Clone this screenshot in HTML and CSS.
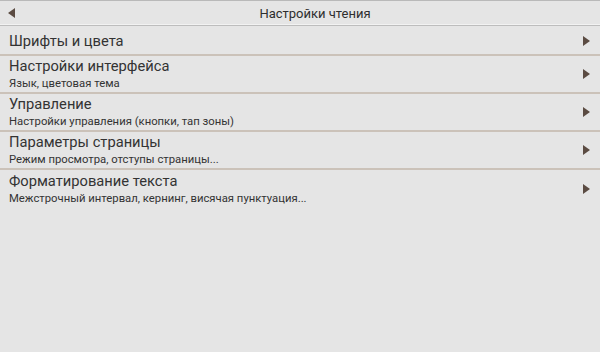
FILE: index.html
```html
<!DOCTYPE html>
<html lang="ru">
<head>
    <meta charset="UTF-8">
    <meta name="viewport" content="width=device-width, initial-scale=1.0">
    <title>Настройки чтения</title>
    <link rel="stylesheet" href="styles.css">
</head>
<body>
    <div class="screen">
        <div class="header">
            <span class="back"></span>
            <h1>Настройки чтения</h1>
        </div>

        <ul class="menu">
            <li class="item single">
                <div class="texts">
                    <div class="title">Шрифты и цвета</div>
                </div>
                <span class="arrow"></span>
            </li>
            <li class="item">
                <div class="texts">
                    <div class="title">Настройки интерфейса</div>
                    <div class="sub">Язык, цветовая тема</div>
                </div>
                <span class="arrow"></span>
            </li>
            <li class="item">
                <div class="texts">
                    <div class="title">Управление</div>
                    <div class="sub">Настройки управления (кнопки, тап зоны)</div>
                </div>
                <span class="arrow"></span>
            </li>
            <li class="item">
                <div class="texts">
                    <div class="title">Параметры страницы</div>
                    <div class="sub">Режим просмотра, отступы страницы...</div>
                </div>
                <span class="arrow"></span>
            </li>
            <li class="item last">
                <div class="texts">
                    <div class="title">Форматирование текста</div>
                    <div class="sub">Межстрочный интервал, кернинг, висячая пунктуация...</div>
                </div>
                <span class="arrow"></span>
            </li>
        </ul>
    </div>
</body>
</html>
```

FILE: styles.css
```css
* {
    margin: 0;
    padding: 0;
    box-sizing: border-box;
}

body {
    font-family: Roboto, 'Noto Sans', sans-serif;
    background: #e5e5e5;
    color: #333;
    width: 600px;
    height: 352px;
    overflow: hidden;
}

.screen {
    height: 352px;
    background: #e5e5e5;
}

/* верхняя панель */
.header {
    position: relative;
    height: 26px;
    border-top: 1px solid #b9b9b9;
    border-bottom: 1px solid #bdbdbd;
    box-shadow: inset 0 -1px 0 #f2f2f2;
    display: flex;
    align-items: center;
    justify-content: center;
}

.header h1 {
    font-size: 13px;
    font-weight: normal;
    color: #2e2e2e;
    padding-left: 30px;
}

.back {
    position: absolute;
    left: 8px;
    top: 7px;
    width: 0;
    height: 0;
    border-top: 5px solid transparent;
    border-bottom: 5px solid transparent;
    border-right: 7px solid #5b4b42;
}

/* список */
.menu {
    list-style: none;
}

.item {
    display: flex;
    align-items: center;
    height: 38px;
    padding: 0 9px 0 9px;
    border-bottom: 2px solid #cbc2b9;
}

.item.single {
    height: 30px;
    padding-top: 2px;
}

.item.last {
    border-bottom: none;
}

.texts {
    flex: 1;
}

.title {
    font-size: 14.7px;
    line-height: 18px;
    color: #333;
}

.sub {
    font-size: 11.3px;
    line-height: 14px;
    color: #333;
    margin-top: 2px;
}

.arrow {
    width: 0;
    height: 0;
    margin-right: 1px;
    border-top: 5px solid transparent;
    border-bottom: 5px solid transparent;
    border-left: 7px solid #5b4b42;
}
```
